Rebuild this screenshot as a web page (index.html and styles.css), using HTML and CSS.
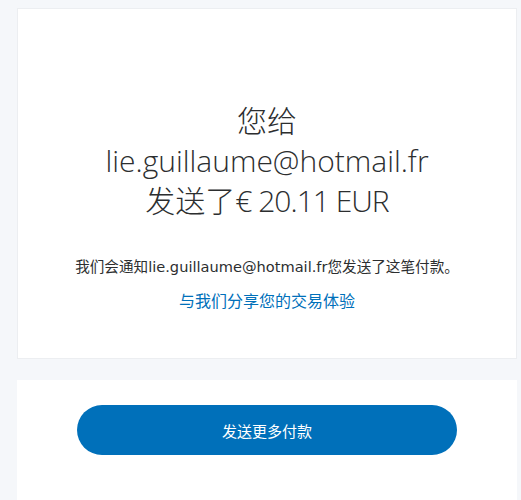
FILE: index.html
```html
<!DOCTYPE html>
<html lang="zh-CN">
<head>
    <meta charset="UTF-8">
    <meta name="viewport" content="width=device-width, initial-scale=1.0">
    <title>付款已发送</title>
    <link rel="stylesheet" href="styles.css">
</head>
<body>
    <div class="page">
        <div class="card confirm-card">
            <h1 class="headline">
                <span class="line">您给</span>
                <span class="line">lie.guillaume@hotmail.fr</span>
                <span class="line">发送了<span class="amount">€ 20.11 EUR</span></span>
            </h1>
            <p class="notice">我们会通知lie.guillaume@hotmail.fr您发送了这笔付款。</p>
            <a class="feedback-link" href="#">与我们分享您的交易体验</a>
        </div>

        <div class="card action-card">
            <button class="send-button">发送更多付款</button>
        </div>
    </div>
</body>
</html>
```

FILE: styles.css
```css
body {
    margin: 0;
    background-color: #f5f7fa;
    font-family: Lato, "Noto Sans CJK SC", sans-serif;
    color: #2c2e2f;
}
.page {
    width: 500px;
    padding: 8px 0 0 17px;
    display: flex;
    flex-direction: column;
    gap: 21px;
}
.card {
    background-color: white;
    text-align: center;
}
.confirm-card {
    height: 351px;
    box-sizing: border-box;
    border: 1px solid #eceef1;
    padding-top: 92px;
}
.headline {
    margin: 0;
    font-family: "Open Sans", "Noto Sans CJK SC", sans-serif;
    font-weight: 300;
    font-size: 30px;
    line-height: 40px;
}
.headline .line {
    display: block;
}
.headline .amount {
    letter-spacing: -1px;
}
.notice {
    margin: 36px 0 0;
    font-family: "DejaVu Sans", "Noto Sans CJK SC", sans-serif;
    font-size: 14.6px;
    line-height: 20px;
}
.feedback-link {
    display: inline-block;
    margin-top: 14px;
    color: #0070ba;
    text-decoration: none;
    font-size: 16px;
    line-height: 20px;
}
.action-card {
    height: 112px;
    padding-top: 25px;
}
.send-button {
    width: 380px;
    height: 50px;
    border: none;
    border-radius: 25px;
    background-color: #0070ba;
    color: white;
    font-family: "Noto Sans CJK SC", sans-serif;
    font-size: 15px;
    cursor: pointer;
}
```
